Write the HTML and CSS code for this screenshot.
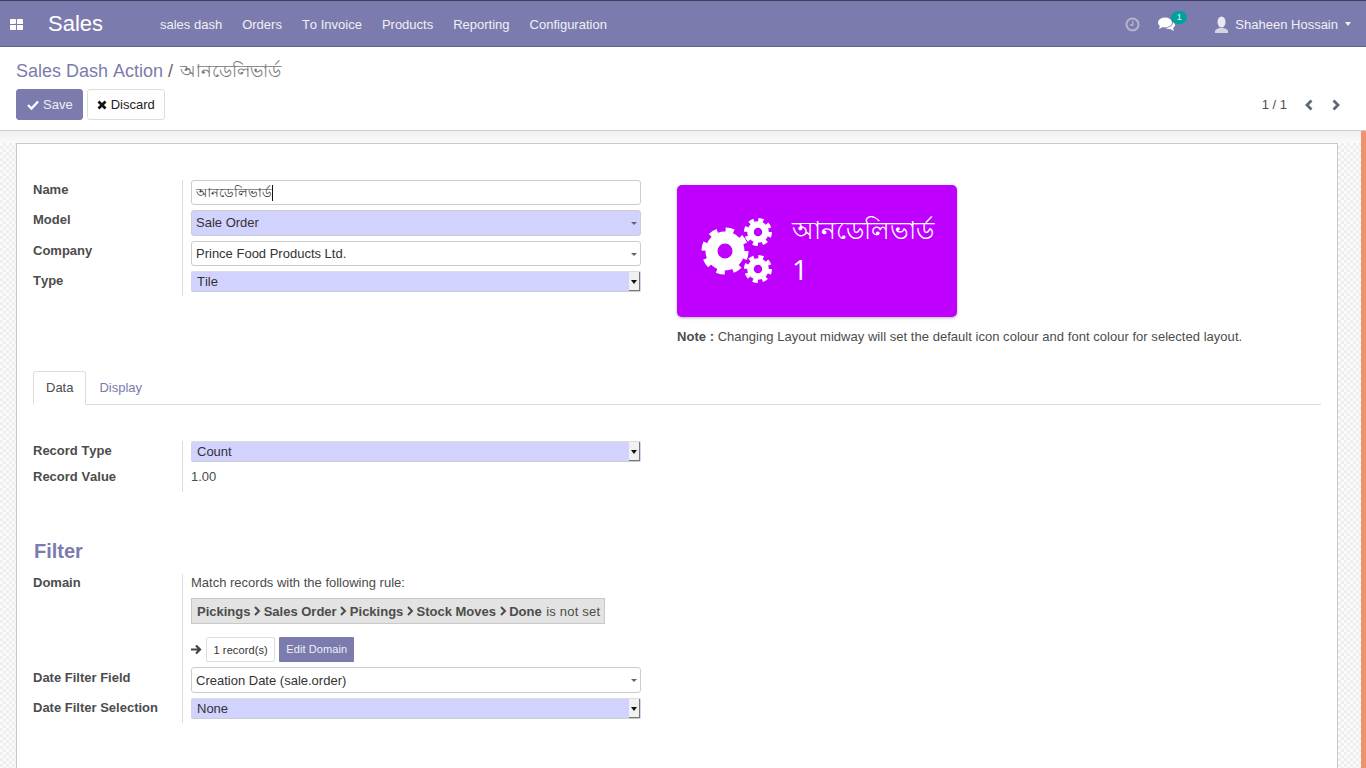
FILE: index.html
```html
<!DOCTYPE html>
<html lang="en">
<head>
    <meta charset="UTF-8">
    <meta name="viewport" content="width=device-width, initial-scale=1.0">
    <title>Sales Dash Action</title>
    <link rel="stylesheet" href="styles.css">
</head>
<body>

    <nav class="navbar">
        <svg class="apps-icon" width="13" height="11" viewBox="0 0 13 11"><path d="M0 1a1 1 0 0 1 1-1h4a1 1 0 0 1 1 1v3a1 1 0 0 1-1 1H0zM7 0h5a1 1 0 0 1 1 1v4H7zM0 6h6v5H1a1 1 0 0 1-1-1zM7 6h6v4a1 1 0 0 1-1 1H7z" fill="#fff"/></svg>
        <span class="brand">Sales</span>
        <ul class="menu">
            <li>sales dash</li>
            <li>Orders</li>
            <li>To Invoice</li>
            <li>Products</li>
            <li>Reporting</li>
            <li>Configuration</li>
        </ul>
        <div class="systray">
            <svg class="clock" width="15" height="15" viewBox="0 0 15 15"><circle cx="7.5" cy="7.5" r="6" fill="none" stroke="#b5b4cf" stroke-width="2"/><path d="M7.8 3.8v4.2H5" fill="none" stroke="#b5b4cf" stroke-width="1.3"/></svg>
            <div class="chat">
                <svg width="17" height="14" viewBox="0 0 17 14"><ellipse cx="7" cy="5.500" rx="7" ry="5" fill="#fff"/><path d="M2 8l-1 4 4-2z" fill="#fff"/><path d="M15 5c1.500 1 2 2 2 3 0 1.300-.8 2.300-2 3l1 3-4-2c-2 0-3.500-.3-4.500-1 4 0 7.500-2.500 7.500-6z" fill="#fff"/></svg>
                <span class="badge">1</span>
            </div>
            <div class="user">
                <svg width="13" height="17" viewBox="0 0 13 17"><ellipse cx="6.500" cy="6" rx="4" ry="5.500" fill="#e9e9ef"/><path d="M0 17v-2c0-1.500 2.500-2.500 4.500-3h4c2 .5 4.500 1.500 4.500 3v2z" fill="#d5d5df"/></svg>
                <span>Shaheen Hossain</span>
                <i class="caret"></i>
            </div>
        </div>
    </nav>

    <header class="control-panel">
        <div class="breadcrumb"><span class="crumb-link">Sales Dash Action</span> <span class="crumb-sep">/</span> <span class="crumb-active">আনডেলিভার্ড</span></div>
        <div class="cp-row">
            <div class="cp-buttons">
                <button class="btn btn-primary">
                    <svg width="12" height="10" viewBox="0 0 12 10"><path d="M1 5l3.500 3.500L11 1.500" fill="none" stroke="#fff" stroke-width="2.400"/></svg>
                    Save
                </button>
                <button class="btn btn-default">
                    <svg width="10" height="10" viewBox="0 0 10 10"><path d="M1.500 1.500l7 7M8.500 1.500l-7 7" fill="none" stroke="#111" stroke-width="2.800"/></svg>
                    Discard
                </button>
            </div>
            <div class="pager">
                <span>1 / 1</span>
                <svg width="10" height="12" viewBox="0 0 10 12"><path d="M7.500 1.500L3 6l4.500 4.500" fill="none" stroke="#5e6877" stroke-width="2.800"/></svg>
                <svg width="10" height="12" viewBox="0 0 10 12"><path d="M2.500 1.500L7 6l-4.500 4.500" fill="none" stroke="#5e6877" stroke-width="2.800"/></svg>
            </div>
        </div>
    </header>

    <main class="content">
        <div class="sheet-wrap">
            <div class="sheet">
                <div class="top-group">
                    <div class="field-table top-fields">
                        <label>Name</label>
                        <div class="input input-name"><span>আনডেলিভার্ড</span><i class="cursor"></i></div>
                        <label>Model</label>
                        <div class="input required h26">Sale Order<i class="mini-caret"></i></div>
                        <label>Company</label>
                        <div class="input">Prince Food Products Ltd.<i class="mini-caret"></i></div>
                        <label>Type</label>
                        <div class="native-select">Tile<span class="select-btn"></span></div>
                    </div>
                    <div class="preview">
                        <div class="tile">
                            <svg class="tile-icon" width="72" height="66" viewBox="0 0 72 66">
                                <g fill="none" stroke="#fff">
                                    <circle cx="24" cy="33" r="13.500" stroke-width="12"/>
                                    <circle cx="24" cy="33" r="21" stroke-width="5" stroke-dasharray="8.200 8.290"/>
                                    <circle cx="57" cy="14" r="7.500" stroke-width="6.500"/>
                                    <circle cx="57" cy="14" r="12" stroke-width="4" stroke-dasharray="5 4.420"/>
                                    <circle cx="57" cy="51" r="7.500" stroke-width="6.500"/>
                                    <circle cx="57" cy="51" r="12" stroke-width="4" stroke-dasharray="5 4.420"/>
                                </g>
                            </svg>
                            <div class="tile-text">
                                <div class="tile-name">আনডেলিভার্ড</div>
                                <div class="tile-value">1</div>
                            </div>
                        </div>
                        <p class="note"><b>Note :</b> Changing Layout midway will set the default icon colour and font colour for selected layout.</p>
                    </div>
                </div>

                <ul class="tabs">
                    <li class="tab active">Data</li>
                    <li class="tab">Display</li>
                </ul>

                <div class="field-table record-fields">
                    <label>Record Type</label>
                    <div class="native-select">Count<span class="select-btn"></span></div>
                    <label>Record Value</label>
                    <div class="plain-value">1.00</div>
                </div>

                <h2 class="section-title">Filter</h2>

                <div class="field-table filter-fields">
                    <label class="high">Domain</label>
                    <div class="domain">
                        <div class="domain-text">Match records with the following rule:</div>
                        <div class="domain-path">
                            <b>Pickings</b><svg width="8" height="10" viewBox="0 0 8 10"><path d="M2 1l4 4-4 4" fill="none" stroke="#4c4c4c" stroke-width="2"/></svg>
                            <b>Sales Order</b><svg width="8" height="10" viewBox="0 0 8 10"><path d="M2 1l4 4-4 4" fill="none" stroke="#4c4c4c" stroke-width="2"/></svg>
                            <b>Pickings</b><svg width="8" height="10" viewBox="0 0 8 10"><path d="M2 1l4 4-4 4" fill="none" stroke="#4c4c4c" stroke-width="2"/></svg>
                            <b>Stock Moves</b><svg width="8" height="10" viewBox="0 0 8 10"><path d="M2 1l4 4-4 4" fill="none" stroke="#4c4c4c" stroke-width="2"/></svg>
                            <b>Done</b><span class="not-set">is not set</span>
                        </div>
                        <div class="domain-actions">
                            <svg width="11" height="11" viewBox="0 0 11 11"><path d="M0 5.500h8M5 1.500l4 4-4 4" fill="none" stroke="#444" stroke-width="2.200"/></svg>
                            <span class="records">1 record(s)</span>
                            <span class="edit-domain">Edit Domain</span>
                        </div>
                    </div>
                    <label class="low">Date Filter Field</label>
                    <div class="input h26 text-low">Creation Date (sale.order)<i class="mini-caret"></i></div>
                    <label>Date Filter Selection</label>
                    <div class="native-select">None<span class="select-btn"></span></div>
                </div>
            </div>
            <div class="scroll-thumb"></div>
        </div>
    </main>

</body>
</html>
```

FILE: styles.css
```css
* {
    box-sizing: border-box;
}

html, body {
    height: 768px;
    margin: 0;
    overflow: hidden;
}

body {
    font-family: "Liberation Sans", Arial, sans-serif;
    font-size: 13px;
    font-kerning: none;
    color: #4c4c4c;
    background: #fff;
}

ul {
    list-style: none;
    margin: 0;
    padding: 0;
}

/* top bar */
.navbar {
    height: 47px;
    background-color: #7c7bad;
    border-top: 1px solid #3f3e5c;
    border-bottom: 1px solid #63628f;
    display: flex;
    align-items: center;
    color: #fff;
    padding-left: 10px;
    padding-top: 1px;
}

.brand {
    font-size: 22px;
    margin-left: 25px;
    width: 112px;
}

.menu {
    display: flex;
    gap: 20px;
    color: #f0f0f6;
}

.systray {
    margin-left: auto;
    display: flex;
    align-items: center;
    color: #f0f0f6;
    padding-right: 15px;
}

.chat {
    display: flex;
    margin-left: 18px;
    position: relative;
    width: 44px;
}

.badge {
    position: absolute;
    left: 13px;
    top: -6px;
    width: 16px;
    height: 13px;
    border-radius: 7px;
    background: #00a09d;
    font-size: 9px;
    line-height: 13px;
    text-align: center;
}

.user {
    display: flex;
    align-items: center;
    gap: 7px;
    margin-left: 13px;
}

.caret {
    border-top: 4px solid #f0f0f6;
    border-left: 3.500px solid transparent;
    border-right: 3.500px solid transparent;
}

/* breadcrumb and buttons */
.control-panel {
    height: 84px;
    padding: 12px 16px 0;
    border-bottom: 1px solid #cfcfcf;
}

.breadcrumb {
    font-size: 18px;
    line-height: 25px;
    height: 30px;
    color: #777;
}

.crumb-link {
    color: #7c7bad;
}

.crumb-sep {
    color: #666;
}

.crumb-active {
    margin-left: 2px;
}

.cp-row {
    display: flex;
    justify-content: space-between;
    align-items: center;
}

.cp-buttons {
    display: flex;
    gap: 4px;
}

.btn {
    height: 31px;
    padding: 0 9px;
    border-radius: 3px;
    font: 13px "Liberation Sans", Arial, sans-serif;
    display: flex;
    align-items: center;
    gap: 4px;
}

.btn-primary {
    background: #7c7bad;
    border: 1px solid #7c7bad;
    color: #f0f0f6;
    padding: 0 9px 0 10px;
}

.btn-default {
    background: #fff;
    border: 1px solid #ddd;
    color: #222;
}

.pager {
    display: flex;
    align-items: center;
    gap: 17px;
    padding-right: 9px;
    color: #4c4c4c;
}

/* sheet area */
.content {
    height: 637px;
    background-color: #fff;
    background-image: linear-gradient(#f0f0f0, #fafafa 12px, transparent 12px), repeating-conic-gradient(#eeeeee 0 25%, #fbfbfb 0 50%);
    background-size: 100% 100%, 6px 6px;
    padding: 12px 28px 0 16px;
    position: relative;
    overflow: hidden;
}

.sheet {
    width: 1322px;
    height: 640px;
    background: #fff;
    border: 1px solid #c8c8d0;
    padding: 36px 16px 0;
}

.scroll-thumb {
    position: absolute;
    top: 0;
    right: 0;
    width: 5px;
    height: 100%;
    background: #f0926c;
}

.top-group {
    display: flex;
    height: 191px;
}

.field-table {
    display: grid;
    grid-template-columns: 150px 458px;
    width: 608px;
}

.field-table > label {
    font-weight: bold;
    border-right: 1px solid #ddd;
    height: 100%;
    padding-top: 2px;
}

.field-table > label.low {
    padding-top: 3px;
}

.field-table > label.high {
    padding-top: 1px;
}

.field-table > div {
    margin-left: 8px;
}

.top-fields {
    grid-template-rows: 30px 31px 30px 25px;
    height: 116px;
}

.input {
    height: 25px;
    border: 1px solid #ccc;
    border-radius: 3px;
    padding: 0 4px;
    line-height: 24px;
    position: relative;
    color: #333;
    background: #fff;
}

.input.h26 {
    height: 26px;
}

.input.text-low {
    line-height: 25px;
}

.input.required {
    background: #d2d2ff;
}

.input-name {
    display: flex;
    align-items: center;
    font-size: 13px;
}

.cursor {
    width: 1px;
    height: 16px;
    background: #111;
}

.mini-caret {
    position: absolute;
    right: 3px;
    top: 11px;
    border-top: 3px solid #666;
    border-left: 3px solid transparent;
    border-right: 3px solid transparent;
}

.native-select {
    height: 21px;
    background: #d2d2ff;
    border-radius: 2px;
    border-top: 1px solid #ddd;
    border-bottom: 1px solid #ccc;
    padding-left: 6px;
    line-height: 20px;
    position: relative;
    color: #333;
}

.select-btn {
    position: absolute;
    right: 1px;
    top: 0;
    width: 11px;
    height: 19px;
    background: #f1f1f1;
    border-right: 1px solid #777;
    border-bottom: 1px solid #777;
}

.select-btn::after {
    content: "";
    position: absolute;
    left: 2px;
    top: 8px;
    border-top: 4px solid #111;
    border-left: 3px solid transparent;
    border-right: 3px solid transparent;
}

.preview {
    margin-left: 36px;
    margin-top: 5px;
}

.tile {
    width: 280px;
    height: 132px;
    background: #bf00ff;
    border-radius: 5px;
    box-shadow: 0 1px 3px rgba(0, 0, 0, 0.3);
    color: #fff;
    display: flex;
    align-items: center;
    padding-left: 24px;
}

.tile-text {
    margin-left: 19px;
    margin-bottom: 3px;
}

.tile-name {
    font-size: 24.600px;
    line-height: 30px;
    margin-bottom: 10px;
}

.tile-value {
    font-size: 28px;
    line-height: 30px;
    margin-top: -2px;
    font-family: "Open Sans", sans-serif;
}

.note {
    margin: 12px 0 0;
    white-space: nowrap;
    letter-spacing: 0.03px;
}

/* tabs */
.tabs {
    display: flex;
    border-bottom: 1px solid #ddd;
    height: 34px;
}

.tab {
    padding: 0 12px;
    height: 34px;
    line-height: 32px;
    color: #7c7bad;
    border: 1px solid transparent;
}

.tab.active {
    height: 34px;
    color: #4c4c4c;
    background: #fff;
    border: 1px solid #ddd;
    border-bottom-color: #fff;
    border-radius: 3px 3px 0 0;
}

.record-fields {
    margin-top: 36px;
    grid-template-rows: 26px 25px;
}

.plain-value {
    padding-top: 2px;
}

.section-title {
    font-size: 20px;
    font-weight: bold;
    color: #7c7bad;
    margin: 46px 0 0 1px;
    line-height: 26px;
}

.filter-fields {
    margin-top: 10px;
    grid-template-rows: 93px 31px 25px;
}

.domain-text {
    line-height: 18px;
}

.domain-path {
    display: inline-flex;
    align-items: center;
    height: 26px;
    margin-top: 6px;
    padding: 0 4px 0 5px;
    background: #e3e3e3;
    border: 1px solid #c9c9c9;
    white-space: nowrap;
    gap: 2.600px;
}

.not-set {
    margin-left: 2px;
    letter-spacing: 0.2px;
}

.domain-actions {
    display: flex;
    align-items: center;
    margin-top: 13px;
    height: 25px;
    font-size: 11px;
    letter-spacing: 0.1px;
}

.records {
    margin-left: 4px;
    height: 25px;
    border: 1px solid #ddd;
    border-radius: 2px;
    padding: 0 6.500px;
    line-height: 24px;
    color: #333;
}

.edit-domain {
    margin-left: 4px;
    height: 25px;
    padding: 0 7px;
    line-height: 25px;
    background: #7c7bad;
    color: #f0f0f6;
    border-radius: 1px;
}
```
